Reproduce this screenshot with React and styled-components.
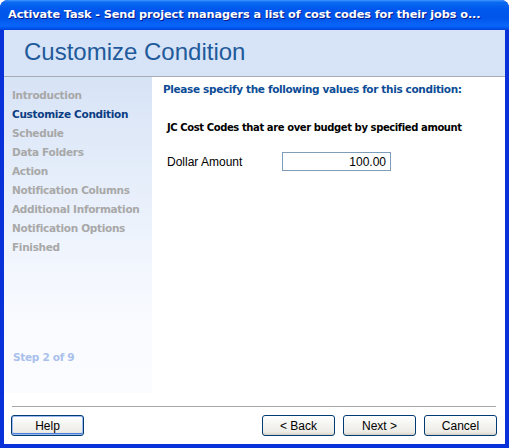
import React from 'react';
import styled, { createGlobalStyle } from 'styled-components';

const GlobalStyle = createGlobalStyle`
    html, body {
        margin: 0;
        padding: 0;
        background: #ffffff;
    }
`;

const Window = styled.div`
    width: 509px;
    height: 448px;
    display: flex;
    flex-direction: column;
    background: #0831d9;
    border-radius: 8px 8px 0 0;
    overflow: hidden;
    box-sizing: border-box;
`;

const TitleBar = styled.div`
    height: 30px;
    flex: none;
    display: flex;
    align-items: center;
    padding: 0 8px 1px;
    box-sizing: border-box;
    background: linear-gradient(180deg, #3d95ff 0%, #0a6af0 8%, #0058ee 30%, #0055ea 60%, #0a66fa 85%, #0059f0 93%, #003fd8 100%);
    color: #ffffff;
    font-family: "DejaVu Sans", sans-serif;
    font-weight: 700;
    font-size: 11.3px;
    letter-spacing: -0.1px;
    text-shadow: 1px 1px 0 #0a1883;
    white-space: nowrap;
`;

const Client = styled.div`
    flex: 1;
    display: flex;
    flex-direction: column;
    margin: 0 4px 4px 4px;
    background: #ffffff;
    min-height: 0;
`;

const Header = styled.div`
    height: 47px;
    flex: none;
    display: flex;
    align-items: center;
    padding: 0 0 2px 20px;
    box-sizing: border-box;
    background: #d7e3f6;
    border-bottom: 1px solid #a8acb3;
    color: #1f5a9b;
    font-family: "Liberation Sans", Arial, sans-serif;
    font-size: 24px;
`;

const Body = styled.div`
    flex: 1;
    display: flex;
    min-height: 0;
`;

const Sidebar = styled.div`
    width: 148px;
    flex: none;
    display: flex;
    flex-direction: column;
    justify-content: space-between;
    padding: 9px 0 30px 8px;
    box-sizing: border-box;
    background: linear-gradient(180deg, #d7e3f6 0%, #e9f0fb 40%, #f8faff 75%, #fbfcff 100%);
`;

const StepList = styled.div`
    display: flex;
    flex-direction: column;
`;

const Step = styled.div`
    height: 19px;
    line-height: 19px;
    font-family: "DejaVu Sans", Verdana, sans-serif;
    font-size: 10.5px;
    font-weight: 700;
    letter-spacing: -0.3px;
    color: ${p => (p.$current ? '#0b3d82' : '#a8a8a8')};
`;

const StepCount = styled.div`
    font-family: "DejaVu Sans", Verdana, sans-serif;
    font-size: 10.5px;
    font-weight: 700;
    letter-spacing: -0.3px;
    color: #a9c0ec;
    padding-left: 1px;
`;

const Main = styled.div`
    flex: 1;
    display: flex;
    flex-direction: column;
    padding: 5px 10px 0 11px;
`;

const Prompt = styled.div`
    font-family: "DejaVu Sans", Verdana, sans-serif;
    font-size: 10.5px;
    font-weight: 700;
    letter-spacing: -0.35px;
    color: #0c4c96;
    line-height: 14px;
`;

const ConditionTitle = styled.div`
    margin: 25px 0 0 4px;
    font-family: "DejaVu Sans", Verdana, sans-serif;
    font-size: 10px;
    font-weight: 700;
    letter-spacing: -0.4px;
    color: #000000;
    line-height: 14px;
`;

const FieldRow = styled.div`
    display: flex;
    align-items: center;
    margin: 17px 0 0 4px;
`;

const FieldLabel = styled.div`
    width: 115px;
    font-family: "Liberation Sans", Arial, sans-serif;
    font-size: 12px;
    color: #000000;
`;

const Input = styled.div`
    width: 109px;
    height: 19px;
    box-sizing: border-box;
    border: 1px solid #7f9db9;
    padding: 0 4px;
    display: flex;
    align-items: center;
    justify-content: flex-end;
    font-family: "Liberation Sans", Arial, sans-serif;
    font-size: 12px;
    color: #000000;
`;

const Footer = styled.div`
    flex: none;
    display: flex;
    flex-direction: column;
    padding: 13px 8px 8px 7px;
`;

const Separator = styled.div`
    height: 1px;
    background: #a8a8a8;
    border-bottom: 1px solid #ffffff;
    margin: 0 1px 7px 1px;
`;

const ButtonRow = styled.div`
    display: flex;
    align-items: center;
    gap: 8px;
`;

const Spacer = styled.div`
    flex: 1;
`;

const Button = styled.button`
    width: 73px;
    height: 21px;
    padding: 0;
    border: 1px solid #003c74;
    border-radius: 3px;
    background: linear-gradient(180deg, #ffffff 0%, #f5f5f2 40%, #ecebe6 85%, #d6d0c5 100%);
    box-shadow: ${p => (p.$focus ? 'inset 0 0 0 1px #9dbbf0, inset 0 -1px 0 1px #4a7fd9' : 'none')};
    font-family: "Liberation Sans", Arial, sans-serif;
    font-size: 12px;
    color: #000000;
`;

const steps = [
    'Introduction',
    'Customize Condition',
    'Schedule',
    'Data Folders',
    'Action',
    'Notification Columns',
    'Additional Information',
    'Notification Options',
    'Finished',
];

const App = () => {
    const current = 1;

    return (
        <>
            <GlobalStyle />
            <Window>
                <TitleBar>Activate Task - Send project managers a list of cost codes for their jobs o...</TitleBar>
                <Client>
                    <Header>Customize Condition</Header>
                    <Body>
                        <Sidebar>
                            <StepList>
                                {steps.map((s, i) => (
                                    <Step key={s} $current={i === current}>{s}</Step>
                                ))}
                            </StepList>
                            <StepCount>Step {current + 1} of {steps.length}</StepCount>
                        </Sidebar>
                        <Main>
                            <Prompt>Please specify the following values for this condition:</Prompt>
                            <ConditionTitle>JC Cost Codes that are over budget by specified amount</ConditionTitle>
                            <FieldRow>
                                <FieldLabel>Dollar Amount</FieldLabel>
                                <Input>100.00</Input>
                            </FieldRow>
                        </Main>
                    </Body>
                    <Footer>
                        <Separator />
                        <ButtonRow>
                            <Button $focus>Help</Button>
                            <Spacer />
                            <Button>&lt; Back</Button>
                            <Button>Next &gt;</Button>
                            <Button>Cancel</Button>
                        </ButtonRow>
                    </Footer>
                </Client>
            </Window>
        </>
    );
};

export default App;
